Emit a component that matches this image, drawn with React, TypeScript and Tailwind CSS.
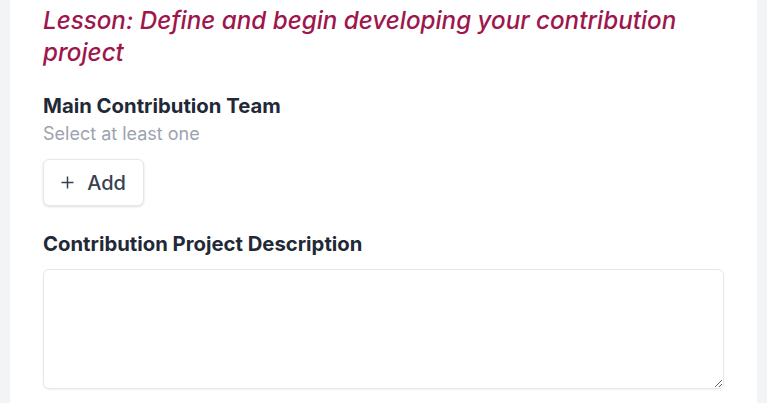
export default function App() {
    return (
        <div className="min-h-screen bg-[#f3f4f6] px-[10px]" style={{ fontFamily: 'Inter, "Noto Sans", sans-serif' }}>
            <div className="min-h-[403px] bg-white px-[33px] pt-[5px] pb-4">
                <h2 className="text-[24.2px] leading-8 font-medium italic text-[#9d174d]">
                    Lesson: Define and begin developing your contribution project
                </h2>

                <div className="mt-[23px]">
                    <h3 className="text-[20.3px] leading-7 font-bold text-[#1f2937]">Main Contribution Team</h3>
                    <p className="text-lg leading-7 text-[#9ca3af]">Select at least one</p>
                    <button className="mt-[11px] flex h-[47px] w-[101px] items-center justify-center gap-[13px] rounded-md border border-gray-200 bg-white text-xl font-medium text-[#374151] shadow-sm">
                        <svg width="13" height="13" viewBox="0 0 13 13" fill="none" stroke="currentColor" strokeWidth="1.5">
                            <path d="M6.5 0.5v12M0.5 6.5h12" />
                        </svg>
                        <span>Add</span>
                    </button>
                </div>

                <div className="mt-6">
                    <h3 className="text-[20.3px] leading-7 font-bold text-[#1f2937]">Contribution Project Description</h3>
                    <textarea className="mt-[11px] block h-[120px] w-full rounded-md border border-gray-200 bg-white px-3 py-2 shadow-xs" />
                </div>
            </div>
        </div>
    )
}
